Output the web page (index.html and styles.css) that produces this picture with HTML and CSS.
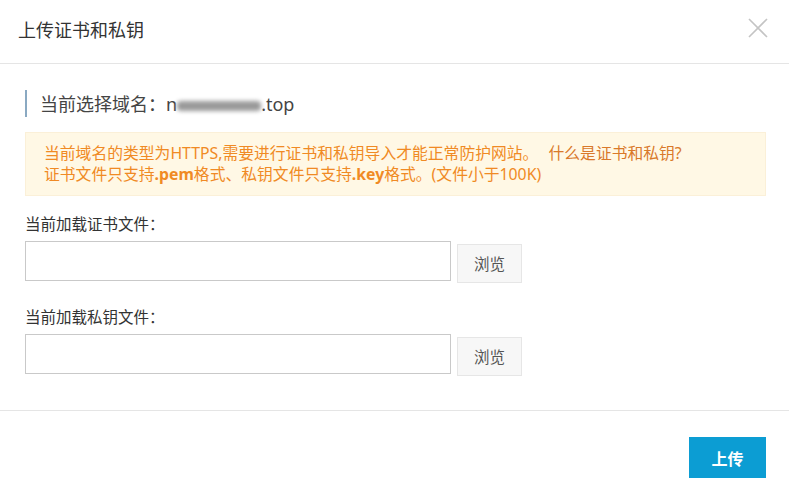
FILE: index.html
```html
<!DOCTYPE html>
<html lang="zh-CN">
<head>
    <meta charset="UTF-8">
    <title>上传证书和私钥</title>
    <link rel="stylesheet" href="styles.css">
</head>
<body>
    <div class="dialog">
        <div class="header">
            <span class="title">上传证书和私钥</span>
            <svg class="close" width="20" height="20" viewBox="0 0 20 20">
                <path d="M1 1 L19 19 M19 1 L1 19" stroke="#c4c4c4" stroke-width="1.6" fill="none"/>
            </svg>
        </div>

        <div class="content">
            <div class="domain"><span class="cjk">当前选择域名：</span>n<span class="masked"></span>.top</div>

            <div class="alert">
                当前域名的类型为HTTPS,需要进行证书和私钥导入才能正常防护网站。 <a class="help">什么是证书和私钥?</a><br>
                证书文件只支持<b>.pem</b>格式、私钥文件只支持<b>.key</b>格式。(文件小于100K)
            </div>

            <div class="field first">
                <div class="label">当前加载证书文件：</div>
                <div class="row">
                    <input class="file" type="text">
                    <button class="browse">浏览</button>
                </div>
            </div>

            <div class="field">
                <div class="label">当前加载私钥文件：</div>
                <div class="row">
                    <input class="file" type="text">
                    <button class="browse">浏览</button>
                </div>
            </div>
        </div>

        <div class="footer">
            <button class="upload">上传</button>
        </div>
    </div>
</body>
</html>
```

FILE: styles.css
```css
body {
    margin: 0;
    font-family: "Noto Sans", "Noto Sans CJK SC", sans-serif;
    color: #333;
    background: #fff;
}

.cjk {
    font-family: "Noto Sans CJK SC", sans-serif;
}

.header {
    height: 63px;
    border-bottom: 1px solid #e5e5e5;
    padding: 0 21px 0 18px;
    display: flex;
    align-items: center;
    justify-content: space-between;
}

.title {
    font-size: 18px;
    margin-top: -5px;
}

.close {
    margin-top: -8px;
}

.content {
    padding: 26px 23px 34px 25px;
}

.domain {
    border-left: 2px solid #8aa9c2;
    padding-left: 13px;
    height: 27px;
    line-height: 27px;
    font-size: 18px;
    color: #444;
}

.masked {
    display: inline-block;
    width: 84px;
    height: 10px;
    background: #9a9a9a;
    filter: blur(2px);
    vertical-align: middle;
    border-radius: 4px;
}

.alert {
    margin-top: 15px;
    background: #fff8e5;
    border: 1px solid #fbf0d8;
    padding: 10px 18px;
    font-size: 15.8px;
    line-height: 21px;
    color: #f08a24;
}

.alert b {
    font-weight: bold;
}

.help {
    color: #d9792a;
    margin-left: 6px;
}

.field {
    padding-top: 23px;
}

.field.first {
    padding-top: 17px;
}

.label {
    font-family: "Noto Sans CJK SC", sans-serif;
    font-size: 15.5px;
    line-height: 20px;
    margin-bottom: 8px;
}

.row {
    display: flex;
    align-items: flex-start;
}

.file {
    width: 426px;
    height: 40px;
    box-sizing: border-box;
    border: 1px solid #c9c9c9;
    margin: 0;
    padding: 0 8px;
}

.browse {
    margin: 3px 0 0 6px;
    width: 65px;
    height: 39px;
    background: #f7f7f7;
    border: 1px solid #e6e6e6;
    color: #555;
    font-family: "Noto Sans", "Noto Sans CJK SC", sans-serif;
    font-size: 15.5px;
    padding: 0;
}

.footer {
    border-top: 1px solid #e5e5e5;
    padding: 26px 23px 0 0;
    display: flex;
    justify-content: flex-end;
}

.upload {
    width: 77px;
    height: 41px;
    background: #0c9dd3;
    border: none;
    color: #fff;
    font-family: "Noto Sans", "Noto Sans CJK SC", sans-serif;
    font-size: 16px;
    font-weight: bold;
    padding: 0;
}
```
